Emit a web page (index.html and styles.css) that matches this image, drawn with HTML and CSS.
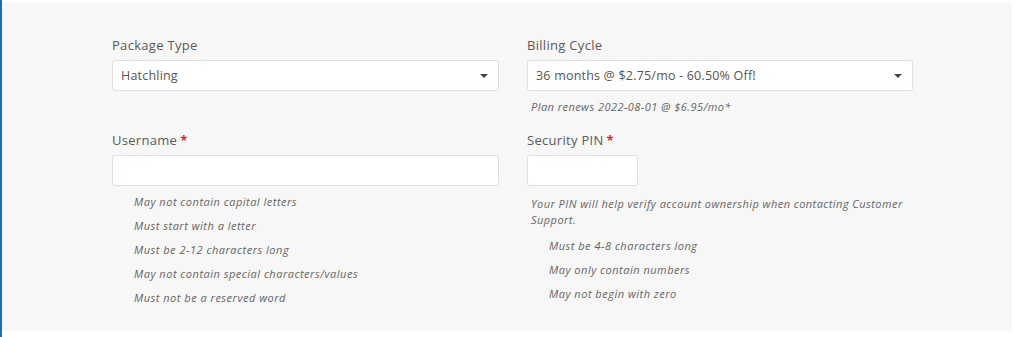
FILE: index.html
```html
<!DOCTYPE html>
<html lang="en">
<head>
  <meta charset="UTF-8">
  <title>Account Setup</title>
  <link rel="stylesheet" href="styles.css">
</head>
<body>
  <div class="panel">
    <div class="form-grid">
      <!-- package -->
      <div class="field">
        <label class="field-label">Package Type</label>
        <div class="select-box">
          <span>Hatchling</span>
          <span class="caret"></span>
        </div>
      </div>

      <!-- billing -->
      <div class="field">
        <label class="field-label">Billing Cycle</label>
        <div class="select-box">
          <span>36 months @ $2.75/mo - 60.50% Off!</span>
          <span class="caret"></span>
        </div>
        <p class="note">Plan renews 2022-08-01 @ $6.95/mo*</p>
      </div>

      <!-- username -->
      <div class="field">
        <label class="field-label">Username<span class="req">*</span></label>
        <input type="text" class="text-input">
        <ul class="rules">
          <li>May not contain capital letters</li>
          <li>Must start with a letter</li>
          <li>Must be 2-12 characters long</li>
          <li>May not contain special characters/values</li>
          <li>Must not be a reserved word</li>
        </ul>
      </div>

      <!-- pin -->
      <div class="field">
        <label class="field-label">Security PIN<span class="req">*</span></label>
        <input type="text" class="text-input pin-input">
        <p class="note pin-note">Your PIN will help verify account ownership when contacting Customer Support.</p>
        <ul class="rules pin-rules">
          <li>Must be 4-8 characters long</li>
          <li>May only contain numbers</li>
          <li>May not begin with zero</li>
        </ul>
      </div>
    </div>
  </div>
</body>
</html>
```

FILE: styles.css
```css
html, body {
  margin: 0;
  height: 100%;
}
body {
  font-family: "Open Sans", "Liberation Sans", sans-serif;
  background: #fff;
  border-left: 2px solid #1f6fb2;
  box-sizing: border-box;
  padding: 3px 12px 6px 0;
  color: #555;
}
.panel {
  background: #f7f7f7;
  height: 100%;
  box-sizing: border-box;
  padding: 33px 0 0 110px;
}
.form-grid {
  display: grid;
  grid-template-columns: 387px 386px;
  column-gap: 28px;
}
.field {
  display: flex;
  flex-direction: column;
  align-items: flex-start;
}
.field-label {
  font-size: 13px;
  line-height: 18px;
  letter-spacing: 0.3px;
  color: #5a5a5a;
  margin-bottom: 6px;
}
.req {
  color: #e0262d;
  font-weight: bold;
  margin-left: 3px;
}
.select-box {
  width: 100%;
  height: 31px;
  box-sizing: border-box;
  background: #fff;
  border: 1px solid #dcdfe3;
  border-radius: 3px;
  display: flex;
  align-items: center;
  justify-content: space-between;
  padding: 0 8px;
  font-size: 12.5px;
  letter-spacing: 0.2px;
  color: #555;
}
.caret {
  width: 0;
  height: 0;
  border-left: 4px solid transparent;
  border-right: 4px solid transparent;
  border-top: 4px solid #444;
  margin-right: 2px;
}
.note {
  margin: 8px 0 0 4px;
  font-size: 11px;
  line-height: 16px;
  letter-spacing: 0.45px;
  font-style: italic;
  color: #666;
}
.text-input {
  width: 100%;
  height: 31px;
  box-sizing: border-box;
  background: #fff;
  border: 1px solid #dcdfe3;
  border-radius: 3px;
  margin: 0;
}
.pin-input {
  width: 111px;
}
.field:nth-child(3), .field:nth-child(4) {
  margin-top: 16px;
}
.rules {
  list-style: none;
  margin: 4px 0 0 22px;
  padding: 0;
  font-size: 11px;
  line-height: 24px;
  letter-spacing: 0.5px;
  font-style: italic;
  color: #666;
}
.pin-note {
  margin-top: 10px;
  width: 386px;
}
.pin-rules {
  margin-top: 6px;
}
```
